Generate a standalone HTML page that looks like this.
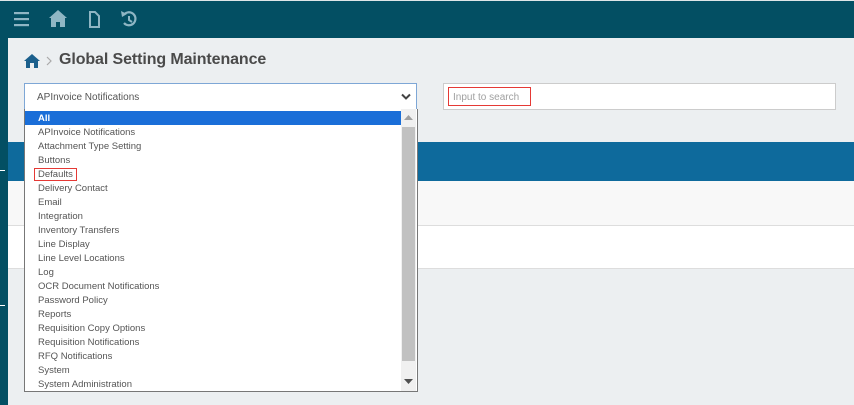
<!DOCTYPE html>
<html><head><style>
*{margin:0;padding:0;box-sizing:border-box}
body{width:854px;height:405px;overflow:hidden;background:#eceff1;font-family:"Liberation Sans",sans-serif;position:relative}
.top{position:absolute;left:0;top:1px;width:854px;height:37px;background:#034f63}
.topline{position:absolute;left:0;top:0;width:854px;height:1px;background:#dfe6e8}
.left{position:absolute;left:0;top:38px;width:8px;height:367px;background:#034f63}
.tick{position:absolute;left:0;width:5px;height:1px;background:#fff}
h1{position:absolute;left:59px;top:51px;font-size:16px;font-weight:bold;color:#4a4a4a;letter-spacing:-0.1px}
.sel{position:absolute;left:24px;top:83px;width:393px;height:27px;background:#fff;border:1px solid #7ea7d6;font-size:10px;color:#555;padding:8px 0 0 12px}
.search{position:absolute;left:443px;top:83px;width:393px;height:27px;background:#fff;border:1px solid #ccc}
.ph{position:absolute;left:4px;top:3px;width:83px;height:19px;border:1.5px solid #e53935;font-size:10px;color:#a0a0a0;padding:4px 0 0 4px}
.band{position:absolute;left:8px;top:142px;width:846px;height:39px;background:#0e6a9c}
.r1{position:absolute;left:8px;top:181px;width:846px;height:45px;background:#f8f8f8;border-bottom:1px solid #ddd}
.r2{position:absolute;left:8px;top:226px;width:846px;height:43px;background:#fff;border-bottom:1px solid #ddd}
.list{position:absolute;left:24px;top:109px;width:394px;height:283px;background:#fff;border:1px solid #777;border-top:none;padding-top:2px}
.it{height:14px;font-size:9.5px;color:#555;padding:1px 0 0 13px;line-height:13px}
.it.on{background:#1a6ed8;color:#fff;font-weight:bold;margin-right:16px}
.sb{position:absolute;right:1px;top:0;width:15px;height:282px;background:#f0f0f0}
.thumb{position:absolute;left:1px;top:18px;width:13px;height:234px;background:#c1c1c1}
.box{display:inline-block;border:1.5px solid #e53935;padding:0 3px;margin-left:-4px;line-height:11px}
</style></head><body>
<div class="topline"></div>
<div class="top">
<svg width="150" height="37" viewBox="0 0 150 37">
<g fill="#8fb6c4">
<rect x="14" y="11" width="15" height="2.2"/><rect x="14" y="17" width="15" height="2.2"/><rect x="14" y="23" width="15" height="2.2"/>
<path d="M58 9 L49 17 L51 17 L51 26 L56 26 L56 21 L60 21 L60 26 L65 26 L65 17 L67 17 Z"/>
<path d="M90 11 h5 l4 4 v11 h-9 z" fill="none" stroke="#8fb6c4" stroke-width="2"/>
<path d="M124.5 13 A6.5 6.5 0 1 1 124 22" fill="none" stroke="#8fb6c4" stroke-width="2.2" transform="translate(0,0)"/>
<path d="M121 10 l1 6 l5 -3 z"/>
<path d="M129 15 v4 l3 2" fill="none" stroke="#8fb6c4" stroke-width="2"/>
</g></svg>
</div>
<div class="left"></div>
<div class="tick" style="top:170px"></div>
<div class="tick" style="top:305px"></div>
<svg style="position:absolute;left:24px;top:53px" width="40" height="16" viewBox="0 0 40 16">
<path d="M8 1 L0 8 L2 8 L2 15 L6 15 L6 10 L10 10 L10 15 L14 15 L14 8 L16 8 Z" fill="#1b5f8c"/>
<path d="M23 4 l4 4 l-4 4" fill="none" stroke="#aaa" stroke-width="1.2"/>
</svg>
<h1>Global Setting Maintenance</h1>
<div class="sel">APInvoice Notifications
<svg style="position:absolute;right:5px;top:9px" width="10" height="8" viewBox="0 0 10 8"><path d="M1 1.5 L5 5.5 L9 1.5" fill="none" stroke="#444" stroke-width="2"/></svg></div>
<div class="search"><div class="ph">Input to search</div></div>
<div class="band"></div>
<div class="r1"></div>
<div class="r2"></div>
<div class="list">
<div class="it on">All</div>
<div class="it">APInvoice Notifications</div>
<div class="it">Attachment Type Setting</div>
<div class="it">Buttons</div>
<div class="it"><span class="box">Defaults</span></div>
<div class="it">Delivery Contact</div>
<div class="it">Email</div>
<div class="it">Integration</div>
<div class="it">Inventory Transfers</div>
<div class="it">Line Display</div>
<div class="it">Line Level Locations</div>
<div class="it">Log</div>
<div class="it">OCR Document Notifications</div>
<div class="it">Password Policy</div>
<div class="it">Reports</div>
<div class="it">Requisition Copy Options</div>
<div class="it">Requisition Notifications</div>
<div class="it">RFQ Notifications</div>
<div class="it">System</div>
<div class="it">System Administration</div>
<div class="sb"><div class="thumb"></div>
<svg style="position:absolute;left:3px;top:6px" width="9" height="6"><path d="M0 5 L4.5 0 L9 5Z" fill="#a0a0a0"/></svg>
<svg style="position:absolute;left:3px;top:270px" width="9" height="6"><path d="M0 0 L4.5 5 L9 0Z" fill="#505050"/></svg>
</div>
</div>
</body></html>
